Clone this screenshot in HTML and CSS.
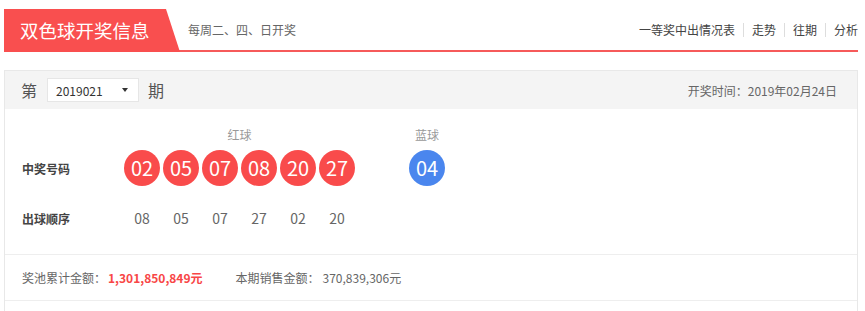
FILE: index.html
```html
<!DOCTYPE html>
<html lang="zh-CN">
<head>
    <meta charset="UTF-8">
    <title>双色球开奖信息</title>
    <link rel="stylesheet" href="styles.css">
</head>
<body>
    <div class="wrap">
        <div class="top-bar">
            <div class="title-tab">双色球开奖信息</div>
            <div class="schedule">每周二、四、日开奖</div>
            <div class="links">
                <a href="#">一等奖中出情况表</a>
                <span class="sep"></span>
                <a href="#">走势</a>
                <span class="sep"></span>
                <a href="#">往期</a>
                <span class="sep"></span>
                <a href="#">分析</a>
            </div>
        </div>

        <div class="panel">
            <div class="panel-head">
                <span class="issue-word">第</span>
                <div class="issue-select">
                    <span>2019021</span>
                    <span class="caret"></span>
                </div>
                <span class="issue-word">期</span>
                <span class="draw-date">开奖时间：2019年02月24日</span>
            </div>

            <div class="draw-body">
                <div class="draw-row head-row">
                    <div class="label"></div>
                    <div class="red-group caption">红球</div>
                    <div class="blue-group caption">蓝球</div>
                </div>
                <div class="draw-row ball-row">
                    <div class="label">中奖号码</div>
                    <div class="red-group">
                        <span class="ball red">02</span>
                        <span class="ball red">05</span>
                        <span class="ball red">07</span>
                        <span class="ball red">08</span>
                        <span class="ball red">20</span>
                        <span class="ball red">27</span>
                    </div>
                    <div class="blue-group">
                        <span class="ball blue">04</span>
                    </div>
                </div>
                <div class="draw-row order-row">
                    <div class="label">出球顺序</div>
                    <div class="red-group">
                        <span class="num">08</span>
                        <span class="num">05</span>
                        <span class="num">07</span>
                        <span class="num">27</span>
                        <span class="num">02</span>
                        <span class="num">20</span>
                    </div>
                    <div class="blue-group"></div>
                </div>
            </div>

            <div class="money-row">
                <span class="money-label">奖池累计金额：</span>
                <span class="money-pool">1,301,850,849元</span>
                <span class="money-label sales">本期销售金额：</span>
                <span class="money-value">370,839,306元</span>
            </div>
            <div class="panel-rest"></div>
        </div>
    </div>
</body>
</html>
```

FILE: styles.css
```css
body {
    margin: 0;
    background: #fff;
    font-family: "Noto Sans CJK SC", "Noto Sans", sans-serif;
    color: #666;
    overflow: hidden;
}
.wrap {
    width: 854px;
    margin: 9px 0 0 4px;
}
.top-bar {
    display: flex;
    align-items: center;
    height: 41px;
    border-bottom: 2px solid #f65a5a;
}
.title-tab {
    width: 160px;
    height: 43px;
    margin-bottom: -2px;
    padding-left: 16px;
    box-sizing: content-box;
    background: #f94f4f;
    color: #fff;
    font-size: 18.5px;
    line-height: 42px;
    clip-path: polygon(0 0, 162px 0, 176px 100%, 0 100%);
}
.schedule {
    margin-left: 8px;
    font-size: 12px;
    color: #666;
}
.links {
    margin-left: auto;
    display: flex;
    align-items: center;
    font-size: 12px;
}
.links a {
    color: #444;
    text-decoration: none;
}
.sep {
    width: 1px;
    height: 14px;
    background: #ddd;
    margin: 0 8px;
}
.panel {
    margin-top: 18px;
    border: 1px solid #e8e8e8;
    border-bottom: none;
}
.panel-head {
    display: flex;
    align-items: center;
    height: 38px;
    background: #f4f4f4;
    padding: 0 20px 0 16px;
}
.issue-word {
    font-size: 16px;
    color: #555;
}
.issue-select {
    display: flex;
    align-items: center;
    width: 92px;
    height: 24px;
    box-sizing: border-box;
    margin: 0 9px 0 10px;
    padding: 0 10px 0 8px;
    background: #fff;
    border: 1px solid #e6e6e6;
    font-size: 12px;
    color: #333;
}
.caret {
    margin-left: auto;
    border-left: 3px solid transparent;
    border-right: 3px solid transparent;
    border-top: 4px solid #333;
}
.draw-date {
    margin-left: auto;
    font-size: 12px;
    color: #666;
}
.draw-body {
    padding: 15px 0 26px 17px;
    border-bottom: 1px solid #eee;
}
.draw-row {
    display: flex;
    align-items: center;
}
.label {
    width: 102px;
    font-size: 12px;
    font-weight: bold;
    color: #444;
}
.red-group {
    width: 231px;
    display: flex;
    gap: 3px;
}
.blue-group {
    width: 36px;
    margin-left: 54px;
    display: flex;
}
.caption {
    justify-content: center;
    font-size: 12px;
    color: #999;
}
.head-row {
    height: 20px;
}
.ball-row {
    margin-top: 6px;
}
.ball {
    width: 36px;
    height: 36px;
    border-radius: 50%;
    color: #fff;
    font-size: 20px;
    line-height: 36px;
    text-align: center;
}
.ball.red {
    background: #f94b4b;
}
.ball.blue {
    background: #4a86ee;
}
.order-row {
    margin-top: 22px;
    height: 20px;
}
.num {
    width: 36px;
    text-align: center;
    font-size: 14px;
    color: #666;
}
.money-row {
    display: flex;
    align-items: center;
    height: 45px;
    padding-left: 17px;
    border-bottom: 1px solid #eee;
    font-size: 12px;
}
.money-label {
    color: #666;
}
.money-pool {
    margin-left: 2px;
    color: #f84646;
    font-weight: bold;
}
.sales {
    margin-left: 33px;
}
.money-value {
    margin-left: 3px;
    color: #666;
}
.panel-rest {
    height: 20px;
}
```
